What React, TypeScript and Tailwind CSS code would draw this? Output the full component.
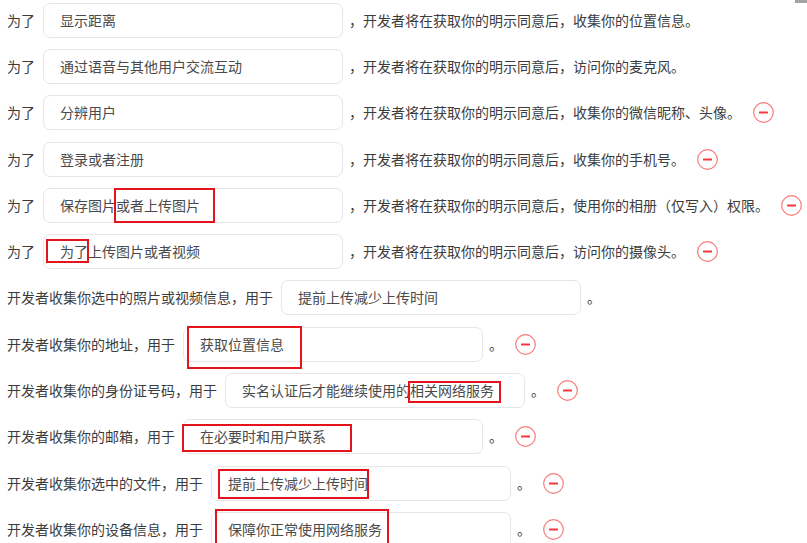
import React from "react";

type Row = {
  label: string;
  value: string;
  suffix: string;
  minus: boolean;
};

const rows: Row[] = [
  { label: "为了", value: "显示距离", suffix: "，开发者将在获取你的明示同意后，收集你的位置信息。", minus: false },
  { label: "为了", value: "通过语音与其他用户交流互动", suffix: "，开发者将在获取你的明示同意后，访问你的麦克风。", minus: false },
  { label: "为了", value: "分辨用户", suffix: "，开发者将在获取你的明示同意后，收集你的微信昵称、头像。", minus: true },
  { label: "为了", value: "登录或者注册", suffix: "，开发者将在获取你的明示同意后，收集你的手机号。", minus: true },
  { label: "为了", value: "保存图片或者上传图片", suffix: "，开发者将在获取你的明示同意后，使用你的相册（仅写入）权限。", minus: true },
  { label: "为了", value: "为了上传图片或者视频", suffix: "，开发者将在获取你的明示同意后，访问你的摄像头。", minus: true },
  { label: "开发者收集你选中的照片或视频信息，用于", value: "提前上传减少上传时间", suffix: "。", minus: false },
  { label: "开发者收集你的地址，用于", value: "获取位置信息", suffix: "。", minus: true },
  { label: "开发者收集你的身份证号码，用于", value: "实名认证后才能继续使用的相关网络服务", suffix: "。", minus: true },
  { label: "开发者收集你的邮箱，用于", value: "在必要时和用户联系", suffix: "。", minus: true },
  { label: "开发者收集你选中的文件，用于", value: "提前上传减少上传时间", suffix: "。", minus: true },
  { label: "开发者收集你的设备信息，用于", value: "保障你正常使用网络服务", suffix: "。", minus: true },
];

function MinusIcon() {
  return (
    <svg width="21" height="21" viewBox="0 0 21 21" className="shrink-0">
      <circle cx="10.5" cy="10.5" r="9.8" fill="none" stroke="#f67c7c" strokeWidth="1.2" />
      <rect x="6" y="9.6" width="9" height="2" rx="0.5" fill="#f5363c" />
    </svg>
  );
}

const boxes = [
  { l: 114, t: 188, w: 101, h: 35 },
  { l: 46, t: 239, w: 43, h: 24 },
  { l: 187, t: 326, w: 115, h: 43 },
  { l: 408, t: 381, w: 93, h: 22 },
  { l: 182, t: 424, w: 170, h: 28 },
  { l: 218, t: 469, w: 151, h: 30 },
  { l: 215, t: 509, w: 174, h: 40 },
];

export default function App() {
  return (
    <div
      className="relative w-[807px] h-[543px] overflow-hidden bg-white text-[14px] text-[#3c3c3c]"
      style={{ fontFamily: '"Noto Sans CJK SC", "Noto Sans", sans-serif' }}
    >
      <div className="flex flex-col gap-[12px] pt-[3px] pl-[7px]">
        {rows.map((r, i) => (
          <div key={i} className="flex items-center h-[34.3px] whitespace-nowrap">
            <span>{r.label}</span>
            <div className="ml-[8px] w-[300px] h-[35px] shrink-0 rounded-[7px] border border-[#e4e6ea] bg-white pl-[16px] flex items-center text-[#4a4a4a]">
              {r.value}
            </div>
            <span className="ml-[6px]">{r.suffix}</span>
            {r.minus && (
              <span className="ml-[12px] flex items-center">
                <MinusIcon />
              </span>
            )}
          </div>
        ))}
      </div>
      {boxes.map((b, i) => (
        <div
          key={i}
          className="absolute border-2 border-[#e4141c] pointer-events-none"
          style={{ left: b.l, top: b.t, width: b.w, height: b.h }}
        />
      ))}
      <div className="absolute right-0 top-0 w-[12px] h-[3px] bg-[#a3a3a3]" />
    </div>
  );
}
